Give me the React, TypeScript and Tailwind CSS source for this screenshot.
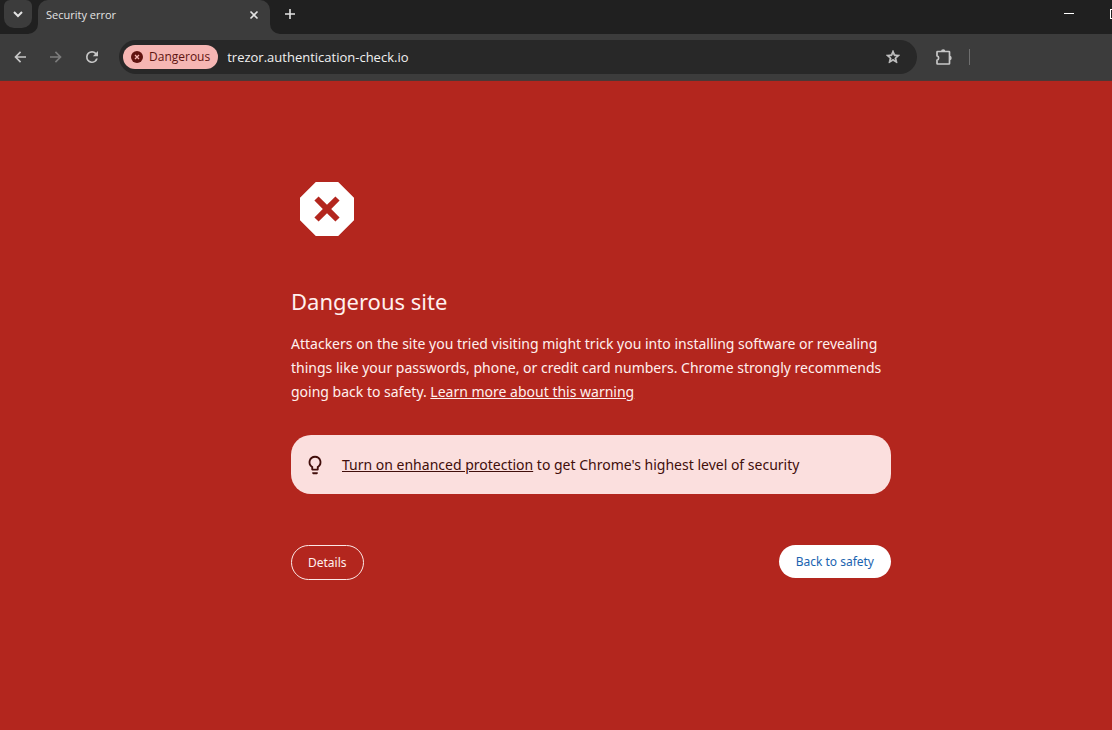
import React from "react";

type IconProps = {
  d: string;
  className?: string;
};

function Icon({ d, className }: IconProps) {
  return (
    <svg viewBox="0 0 24 24" fill="currentColor" aria-hidden="true" className={className}>
      <path d={d} />
    </svg>
  );
}

const icons = {
  back: "M21 10.8H8.1l5.6-5.6L12 3.5 3.5 12l8.5 8.5 1.7-1.7-5.6-5.6H21z",
  forward: "M12 3.5l-1.7 1.7 5.6 5.6H3v2.4h12.9l-5.6 5.6 1.7 1.7 8.5-8.5z",
  reload:
    "M18.3 5.7A9 9 0 0 0 12 3a9 9 0 1 0 8.7 11.3h-2.6A6.5 6.5 0 1 1 12 5.5c1.8 0 3.4.7 4.5 1.9l-3.3 3.3H21V3z",
  star: "M22 9.24l-7.19-.62L12 2 9.19 8.63 2 9.24l5.46 4.73L5.82 21 12 17.27 18.18 21l-1.63-7.03L22 9.24zM12 15.4l-3.76 2.27 1-4.28-3.32-2.88 4.38-.38L12 6.1l1.71 4.04 4.38.38-3.32 2.88 1 4.28L12 15.4z",
  danger:
    "M15.73 3H8.27L3 8.27v7.46L8.27 21h7.46L21 15.73V8.27L15.73 3zm.47 11.8l-1.4 1.4-2.8-2.8-2.8 2.8-1.4-1.4 2.8-2.8-2.8-2.8 1.4-1.4 2.8 2.8 2.8-2.8 1.4 1.4-2.8 2.8 2.8 2.8z",
  bulb: "M9 21c0 .55.45 1 1 1h4c.55 0 1-.45 1-1v-1H9v1zm3-19a7 7 0 0 0-4 12.74V17c0 .55.45 1 1 1h6c.55 0 1-.45 1-1v-2.26A7 7 0 0 0 12 2zm2.85 11.1l-.85.6V16h-4v-2.3l-.85-.6A5 5 0 1 1 17 9c0 1.63-.8 3.16-2.15 4.1z",
};

function TabStrip() {
  return (
    <div className="flex h-[34px] items-start bg-[#202020] text-[#e3e3e3]">
      {/* Tab search */}
      <div className="pl-1 pr-1.5">
        <button
          type="button"
          aria-label="Search tabs"
          className="flex h-7 w-7 items-center justify-center rounded-b-[10px] rounded-t-md bg-[#3c3c3c]"
        >
          <svg viewBox="0 0 12 12" className="size-3" fill="none" stroke="currentColor" strokeWidth="2" aria-hidden="true">
            <path d="M2 4l4 4 4-4" />
          </svg>
        </button>
      </div>

      {/* Active tab, with the flared feet on both sides */}
      <div className="relative flex h-full w-[232px] items-center rounded-t-[10px] bg-[#3c3c3c] pb-1 pl-2 pr-2.5">
        <svg viewBox="0 0 10 10" className="absolute -left-2.5 bottom-0 size-2.5 text-[#3c3c3c]" fill="currentColor" aria-hidden="true">
          <path d="M10 0v10H0A10 10 0 0 0 10 0z" />
        </svg>
        <svg viewBox="0 0 10 10" className="absolute -right-2.5 bottom-0 size-2.5 text-[#3c3c3c]" fill="currentColor" aria-hidden="true">
          <path d="M0 0v10h10A10 10 0 0 1 0 0z" />
        </svg>
        <span className="flex-1 truncate text-[11px] leading-4">Security error</span>
        <button type="button" aria-label="Close tab" className="flex size-3 items-center justify-center">
          <svg viewBox="0 0 12 12" className="size-3" fill="none" stroke="currentColor" strokeWidth="1.6" aria-hidden="true">
            <path d="M2.5 2.5l7 7M9.5 2.5l-7 7" />
          </svg>
        </button>
      </div>

      <button type="button" aria-label="New tab" className="ml-3 flex h-7 w-4 items-center justify-center">
        <svg viewBox="0 0 12 12" className="size-3" fill="none" stroke="currentColor" strokeWidth="1.6" aria-hidden="true">
          <path d="M6 1v10M1 6h10" />
        </svg>
      </button>

      {/* Window controls */}
      <div className="ml-auto flex h-7 items-start text-white">
        <button type="button" aria-label="Minimize" className="flex h-[27px] w-[46px] items-center justify-center">
          <span className="h-px w-2.5 bg-current" />
        </button>
        <button type="button" aria-label="Maximize" className="flex h-7 w-5 items-center justify-end overflow-hidden">
          <span className="h-2.5 w-0.5 border-y border-l border-current" />
        </button>
      </div>
    </div>
  );
}

function Toolbar() {
  return (
    <div className="flex h-[47px] items-center border-b border-[#4c3836] bg-[#3c3c3c] pl-3 text-[#c7c7c7]">
      <div className="flex items-center gap-5">
        <button type="button" aria-label="Back" className="size-4">
          <Icon d={icons.back} className="size-4" />
        </button>
        <button type="button" aria-label="Forward" className="size-4 text-[#7c7c7c]">
          <Icon d={icons.forward} className="size-4" />
        </button>
        <button type="button" aria-label="Reload" className="size-4">
          <Icon d={icons.reload} className="size-4" />
        </button>
      </div>

      {/* Address bar */}
      <div className="ml-[19px] flex h-[34px] flex-1 items-center rounded-full bg-[#282828] pl-1 pr-4">
        <button
          type="button"
          className="flex h-6 items-center gap-1.5 rounded-full bg-[#f6b6b3] px-2 text-xs text-[#601410]"
        >
          <svg viewBox="0 0 12 12" className="size-3" aria-hidden="true">
            <circle cx="6" cy="6" r="6" fill="currentColor" />
            <path d="M4 4l4 4M8 4l-4 4" stroke="#f6b6b3" strokeWidth="1.3" />
          </svg>
          Dangerous
        </button>
        <input
          type="text"
          aria-label="Address"
          defaultValue="trezor.authentication-check.io"
          className="ml-[9px] min-w-0 flex-1 bg-transparent text-[13px] leading-5 text-[#f0f0f0] outline-none"
        />
        <button type="button" aria-label="Bookmark this page" className="size-4">
          <Icon d={icons.star} className="size-4 stroke-current" />
        </button>
      </div>

      <div className="flex w-[195px] items-center gap-4 pl-[18px]">
        <button type="button" aria-label="Extensions" className="size-[18px]">
          <svg viewBox="0 0 18 18" className="size-[18px]" aria-hidden="true">
            <path
              d="M2.500 3.500H14a.5.5 0 0 1 .5.5v11.500a.5.5 0 0 1-.5.5H2.500a.5.5 0 0 1-.5-.5v-3.300a2.300 2.300 0 0 0 0-4.400V4a.5.5 0 0 1 .5-.5z"
              fill="none"
              stroke="currentColor"
              strokeWidth="1.7"
            />
            <path d="M6 3.500a2.200 2.200 0 0 1 4.400 0zM14.500 7.800a2.200 2.200 0 0 1 0 4.400z" fill="currentColor" />
          </svg>
        </button>
        <span className="h-4 w-px bg-[#6e6e6e]" />
      </div>
    </div>
  );
}

function Warning() {
  return (
    <main className="flex-1 bg-[#b3261e] pl-[70px] font-['Noto_Sans',sans-serif] text-[#fff0ee]">
      <div className="mx-auto max-w-[600px] pt-[92px]">
        <Icon d={icons.danger} className="size-[72px] text-white" />
        <h1 className="mt-10 text-[22px] leading-8">Dangerous site</h1>
        <p className="mt-[15px] text-sm leading-6">
          Attackers on the site you tried visiting might trick you into installing software or revealing things like
          your passwords, phone, or credit card numbers. Chrome strongly recommends going back to safety.{" "}
          <a href="#learn-more" className="underline">
            Learn more about this warning
          </a>
        </p>

        <div className="mt-[31px] flex h-[59px] items-center gap-4 rounded-[20px] bg-[#fbdfde] px-3 text-[#410e0b]">
          <Icon d={icons.bulb} className="ml-px size-[22px] shrink-0" />
          <p className="text-sm leading-6">
            <a href="#enhanced-protection" className="underline">
              Turn on enhanced protection
            </a>{" "}
            to get Chrome's highest level of security
          </p>
        </div>

        <div className="mt-[51px] flex items-start justify-between text-xs">
          <button type="button" className="h-[35px] rounded-full border border-[#fce8e6] px-4 pt-px">
            Details
          </button>
          <button type="button" className="h-[33px] rounded-full bg-white px-[17px] pt-px text-[#1a63b0]">
            Back to safety
          </button>
        </div>
      </div>
    </main>
  );
}

export default function App() {
  return (
    <div className="flex min-h-screen flex-col font-['Open_Sans','Noto_Sans',sans-serif]">
      <TabStrip />
      <Toolbar />
      <Warning />
    </div>
  );
}
